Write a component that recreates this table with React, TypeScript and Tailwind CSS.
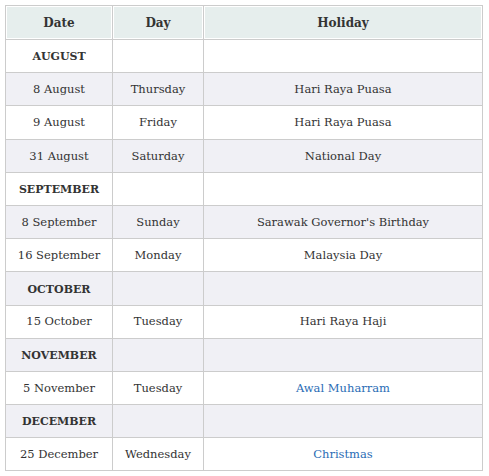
type Row =
  | { month: string }
  | { date: string; day: string; holiday: string; link?: boolean };

const rows: Row[] = [
  { month: "AUGUST" },
  { date: "8 August", day: "Thursday", holiday: "Hari Raya Puasa" },
  { date: "9 August", day: "Friday", holiday: "Hari Raya Puasa" },
  { date: "31 August", day: "Saturday", holiday: "National Day" },
  { month: "SEPTEMBER" },
  { date: "8 September", day: "Sunday", holiday: "Sarawak Governor's Birthday" },
  { date: "16 September", day: "Monday", holiday: "Malaysia Day" },
  { month: "OCTOBER" },
  { date: "15 October", day: "Tuesday", holiday: "Hari Raya Haji" },
  { month: "NOVEMBER" },
  { date: "5 November", day: "Tuesday", holiday: "Awal Muharram", link: true },
  { month: "DECEMBER" },
  { date: "25 December", day: "Wednesday", holiday: "Christmas", link: true },
];

const cell = "border border-[#cccccc] text-center align-middle p-0 h-[33.2px]";

export default function App() {
  return (
    <div
      className="bg-white w-[489px] h-[476px] pl-[5px] pt-[5px] text-[#333333]"
      style={{ fontFamily: '"DejaVu Serif", Georgia, serif' }}
    >
      <table className="border-collapse w-[478px] table-fixed">
        <colgroup>
          <col className="w-[107px]" />
          <col className="w-[91px]" />
          <col />
        </colgroup>
        <thead>
          <tr>
            {["Date", "Day", "Holiday"].map((h) => (
              <th
                key={h}
                className="border border-[#cccccc] text-center align-middle p-0 h-[34px] bg-[#e6eeed] font-bold text-[12px] shadow-[inset_0_0_0_1px_#ffffff]"
              >
                {h}
              </th>
            ))}
          </tr>
        </thead>
        <tbody>
          {rows.map((r, i) => {
            const bg = i % 2 === 1 ? "bg-[#f0f0f5]" : "bg-white";
            if ("month" in r) {
              return (
                <tr key={i} className={bg}>
                  <td className={`${cell} pt-[3px] font-bold text-[11px]`}>{r.month}</td>
                  <td className={cell}></td>
                  <td className={cell}></td>
                </tr>
              );
            }
            return (
              <tr key={i} className={bg}>
                <td className={`${cell} pt-[1px] text-[11.5px]`}>{r.date}</td>
                <td className={`${cell} pt-[1px] text-[11.5px]`}>{r.day}</td>
                <td className={`${cell} pt-[1px] text-[11.5px] ${r.link ? "text-[#2a6cb5]" : ""}`}>
                  {r.holiday}
                </td>
              </tr>
            );
          })}
        </tbody>
      </table>
    </div>
  );
}
